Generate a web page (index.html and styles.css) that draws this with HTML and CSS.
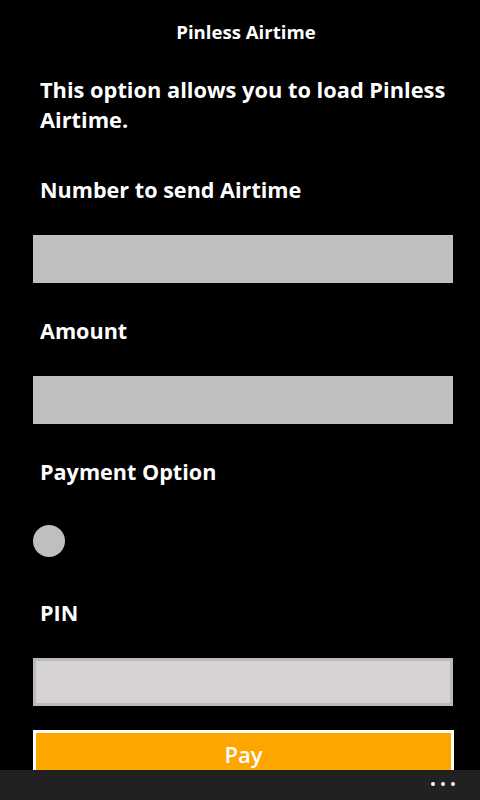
FILE: index.html
```html
<!DOCTYPE html>
<html>
<head>
<meta charset="utf-8">
<link rel="stylesheet" href="styles.css">
</head>
<body>
<div class="page">
  <header class="title">Pinless Airtime</header>
  <p class="intro">This option allows you to load Pinless Airtime.</p>
  <div class="label l-first">Number to send Airtime</div>
  <div class="field"></div>
  <div class="label">Amount</div>
  <div class="field"></div>
  <div class="label">Payment Option</div>
  <div class="radio"></div>
  <div class="label l-pin">PIN</div>
  <div class="field field-pin"></div>
  <button class="pay">Pay</button>
</div>
<div class="appbar">
  <div class="dots"><span></span><span></span><span></span></div>
</div>
</body>
</html>
```
FILE: styles.css
```css
html, body {
  margin: 0;
  padding: 0;
  background: #000;
}
body {
  width: 480px;
  height: 800px;
  overflow: hidden;
  position: relative;
  font-family: "Open Sans", "Noto Sans", sans-serif;
  color: #fff;
}
.page {
  display: flex;
  flex-direction: column;
  padding: 0 27px 0 33px;
}
.title {
  height: 64px;
  line-height: 64px;
  text-align: center;
  font-size: 18.6px;
  font-weight: 700;
  margin-left: -33px;
  margin-right: -27px;
  padding-left: 12px;
}
.intro {
  margin: 11px 0 0 0;
  padding-left: 7px;
  font-size: 21.8px;
  font-weight: 700;
  line-height: 30px;
}
.label {
  padding-left: 7px;
  font-size: 21.6px;
  font-weight: 700;
  line-height: 30px;
  margin-top: 33px;
}
.l-first { margin-top: 40px; }
.l-pin { margin-top: 41px; }
.field {
  margin-top: 30px;
  height: 48px;
  background: #bfbfbf;
}
.field-pin {
  box-sizing: border-box;
  border: 3px solid #bababa;
  background: #d6d2d6;
}
.radio {
  margin-top: 38px;
  width: 32px;
  height: 32px;
  border-radius: 50%;
  background: #bfbfbf;
}
.pay {
  margin-top: 24px;
  height: 48px;
  box-sizing: border-box;
  border: 3px solid #fff;
  background: #ffa500;
  color: #fff;
  font-family: "Open Sans", "Noto Sans", sans-serif;
  font-size: 22px;
  font-weight: 600;
  padding: 0;
  width: 421px;
}
.appbar {
  position: absolute;
  left: 0;
  right: 0;
  bottom: 0;
  height: 30px;
  background: #212121;
  display: flex;
  justify-content: flex-end;
  align-items: center;
}
.dots {
  display: flex;
  gap: 6px;
  margin-right: 25px;
  margin-top: -2px;
}
.dots span {
  width: 4px;
  height: 4px;
  border-radius: 50%;
  background: #fff;
}
```
